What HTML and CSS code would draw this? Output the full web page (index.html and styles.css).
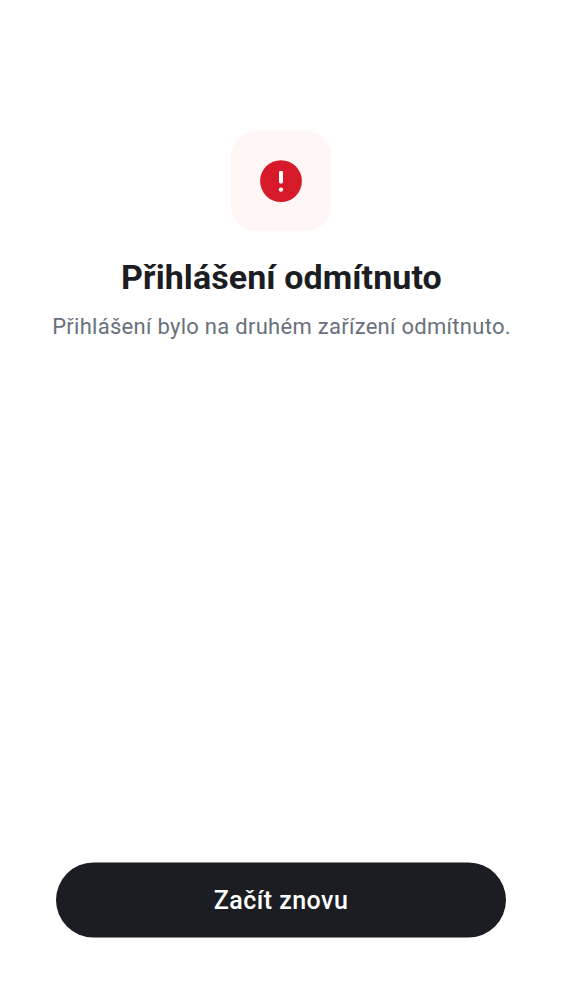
FILE: index.html
```html
<!DOCTYPE html>
<html lang="cs">
<head>
<meta charset="utf-8">
<title>Přihlášení odmítnuto</title>
<link rel="stylesheet" href="styles.css">
</head>
<body>
<main class="screen">
  <section class="message">
    <div class="badge">
      <svg class="icon" viewBox="0 0 42 42" aria-hidden="true">
        <circle cx="21" cy="21.1" r="20.9" fill="#d61a29"/>
        <rect x="19" y="11" width="4" height="12.4" rx="1.3" fill="#fff"/>
        <circle cx="21" cy="29.6" r="2.2" fill="#fff"/>
      </svg>
    </div>
    <h1 class="title">Přihlášení odmítnuto</h1>
    <p class="text">Přihlášení bylo na druhém zařízení odmítnuto.</p>
  </section>
  <button class="button" type="button">Začít znovu</button>
</main>
</body>
</html>
```

FILE: styles.css
```css
body {
  margin: 0;
  background: #fff;
  font-family: Roboto, sans-serif;
}

.screen {
  box-sizing: border-box;
  height: 1000px;
  padding: 131px 0 62px;
  display: flex;
  flex-direction: column;
  justify-content: space-between;
  align-items: center;
}

.message {
  display: flex;
  flex-direction: column;
  align-items: center;
  white-space: nowrap;
}

.badge {
  width: 100px;
  height: 100px;
  display: grid;
  place-items: center;
  border-radius: 25px;
  background: #fff6f5;
}

.icon {
  width: 42px;
  height: 42px;
}

.title {
  margin: 26px 0 0;
  padding-left: 1px;
  font-size: 34px;
  line-height: 40px;
  font-weight: 700;
  letter-spacing: 0.08px;
  color: #1c1d22;
}

.text {
  margin: 15px 0 0;
  padding-left: 1px;
  font-size: 22px;
  line-height: 30px;
  letter-spacing: 0.28px;
  color: #68717b;
}

.button {
  position: relative;
  z-index: 0;
  width: 450px;
  height: 75px;
  padding: 0;
  border: 0;
  background: none;
  color: #fff;
  font: 500 25px/30px Roboto, sans-serif;
  letter-spacing: 0.47px;
}

.button::before {
  content: "";
  position: absolute;
  inset: 0;
  z-index: -1;
  border-radius: 37.5px;
  background: #1c1d22;
  transform: translateY(-0.5px);
}
```
